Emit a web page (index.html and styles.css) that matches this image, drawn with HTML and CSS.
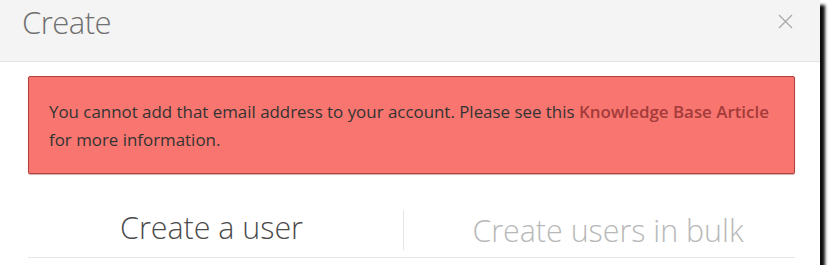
FILE: index.html
```html
<!DOCTYPE html>
<html>
<head>
<meta charset="utf-8">
<link rel="stylesheet" href="styles.css">
</head>
<body>
<div class="dialog">
  <div class="header">
    <h1 class="title">Create</h1>
    <button class="close" aria-label="Close">
      <svg width="15" height="15" viewBox="0 0 15 15"><path d="M1 1 L14 14 M14 1 L1 14" stroke="#a9a9a9" stroke-width="1.3" fill="none"/></svg>
    </button>
  </div>
  <div class="body">
    <div class="alert">
      You cannot add that email address to your account. Please see this <a class="link" href="#">Knowledge Base Article</a> for more information.
    </div>
    <div class="tabs">
      <div class="tab active">Create a user</div>
      <div class="tab inactive">Create users in bulk</div>
    </div>
  </div>
</div>
</body>
</html>
```
FILE: styles.css
```css
html, body {
  margin: 0;
  padding: 0;
  background: #ffffff;
}
body {
  font-family: "Open Sans", "Liberation Sans", sans-serif;
}
.dialog {
  width: 820px;
  height: 265px;
  background: #ffffff;
  box-shadow: 5px 5px 3px rgba(0, 0, 0, 0.95);
  display: flex;
  flex-direction: column;
  overflow: hidden;
}
.header {
  height: 61px;
  background: #f4f4f4;
  border-bottom: 1px solid #e2e2e2;
  display: flex;
  justify-content: space-between;
  align-items: flex-start;
  padding: 0 27px 0 22px;
  flex-shrink: 0;
}
.title {
  margin: 0;
  padding-top: 2px;
  font-weight: 300;
  font-size: 31px;
  line-height: 40px;
  color: #707070;
  letter-spacing: -0.5px;
}
.close {
  border: 0;
  background: none;
  padding: 0;
  margin-top: 14px;
  width: 15px;
  height: 15px;
  display: flex;
}
.body {
  padding: 14px 25px 0 28px;
  display: flex;
  flex-direction: column;
}
.alert {
  background: #f8766f;
  border: 1px solid #b3403d;
  border-radius: 2px;
  box-shadow: 0 1px 1px rgba(120, 30, 30, 0.35);
  padding: 21px 22px 19px 20px;
  font-size: 16.9px;
  line-height: 28px;
  color: #333333;
  height: 56px;
}
.link {
  color: #a33b3b;
  font-weight: 600;
  text-decoration: none;
}
.tabs {
  margin-top: 26px;
  display: flex;
  border-bottom: 1px solid #e6e6e6;
  height: 57px;
}
.tab {
  display: flex;
  justify-content: center;
  align-items: center;
  font-weight: 300;
  font-size: 30.4px;
  padding-bottom: 2px;
  box-sizing: border-box;
}
.active {
  flex: 0 0 375px;
  color: #4b4b4b;
  padding-right: 8px;
}
.inactive {
  flex: 1;
  color: #b8b8b8;
  border-left: 1px solid #e6e6e6;
  margin: 10px 0 7px 0;
  padding-bottom: 0;
  padding-left: 17px;
}
```
